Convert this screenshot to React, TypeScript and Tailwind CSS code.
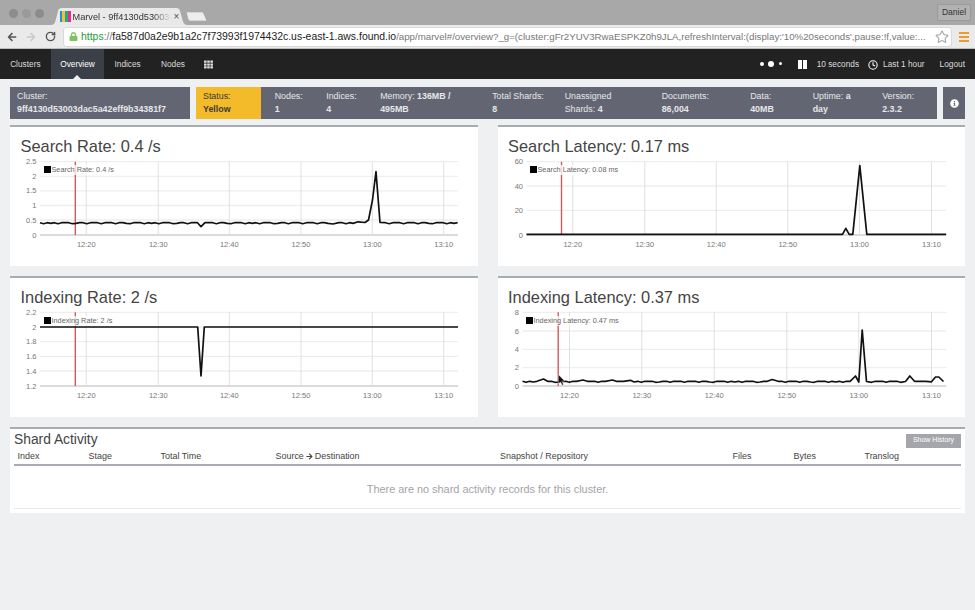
import { FaArrowLeft, FaArrowRight, FaInfoCircle, FaLock, FaTh } from 'react-icons/fa';
import { LuClock, LuRotateCw, LuStar } from 'react-icons/lu';

// Chart points are written in page coordinates, the viewBox of each chart takes care of the offset
type ChartProps = {
  left: number;
  top: number;
  plotLeft: number;
  plotRight: number;
  plotTop: number;
  plotBottom: number;
  yLabels: { y: number; label: string }[];
  xTicks: { x: number; label: string }[];
  redX: number;
  points: [number, number][];
  cursor?: boolean;
};

function wiggle(from: number, to: number, base: number, extra: [number, number][]): [number, number][] {
  const pts: [number, number][] = [];
  let i = 0;
  for (let x = from; x <= to; x += 3.6) {
    const near = extra.some(([ex]) => Math.abs(ex - x) < 3.6);
    if (!near) pts.push([x, base + (i % 4 === 1 ? 1 : i % 7 === 3 ? 0.7 : 0)]);
    i++;
  }
  return [...pts, ...extra].sort((a, b) => a[0] - b[0]);
}

const charts: { title: string; legend: string; legendX: number; chart: ChartProps }[] = [
  {
    title: 'Search Rate: 0.4 /s',
    legend: 'Search Rate: 0.4 /s',
    legendX: 44,
    chart: {
      left: 10,
      top: 155,
      plotLeft: 40,
      plotRight: 458,
      plotTop: 161.7,
      plotBottom: 235,
      yLabels: [
        { y: 161.7, label: '2.5' },
        { y: 176.3, label: '2' },
        { y: 190.8, label: '1.5' },
        { y: 205.5, label: '1' },
        { y: 220, label: '0.5' },
        { y: 235, label: '0' },
      ],
      xTicks: [
        { x: 86.3, label: '12:20' },
        { x: 158.3, label: '12:30' },
        { x: 229.3, label: '12:40' },
        { x: 301, label: '12:50' },
        { x: 372.3, label: '13:00' },
        { x: 443.7, label: '13:10' },
      ],
      redX: 75.3,
      points: wiggle(40, 458, 222.7, [
        [197.5, 222.7],
        [201, 226.7],
        [205, 222.7],
        [333, 224],
        [358, 221.8],
        [365, 222.5],
        [368.5, 220],
        [372.5, 200],
        [376, 171.7],
        [380, 222.5],
      ]),
    },
  },
  {
    title: 'Search Latency: 0.17 ms',
    legend: 'Search Latency: 0.08 ms',
    legendX: 530,
    chart: {
      left: 497.5,
      top: 155,
      plotLeft: 526,
      plotRight: 945.7,
      plotTop: 161.7,
      plotBottom: 235,
      yLabels: [
        { y: 161.7, label: '60' },
        { y: 186, label: '40' },
        { y: 210.3, label: '20' },
        { y: 235, label: '0' },
      ],
      xTicks: [
        { x: 572.3, label: '12:20' },
        { x: 644.3, label: '12:30' },
        { x: 715.7, label: '12:40' },
        { x: 787.3, label: '12:50' },
        { x: 859, label: '13:00' },
        { x: 931, label: '13:10' },
      ],
      redX: 561,
      points: [
        [526, 234.3],
        [842, 234.3],
        [845.3, 228.3],
        [848.7, 234.3],
        [852.3, 234.3],
        [859.3, 165.7],
        [866.3, 234.3],
        [945.7, 234.3],
      ],
    },
  },
  {
    title: 'Indexing Rate: 2 /s',
    legend: 'Indexing Rate: 2 /s',
    legendX: 44,
    chart: {
      left: 10,
      top: 306,
      plotLeft: 40,
      plotRight: 458,
      plotTop: 312.3,
      plotBottom: 386,
      yLabels: [
        { y: 312.3, label: '2.2' },
        { y: 327, label: '2' },
        { y: 341.7, label: '1.8' },
        { y: 356.3, label: '1.6' },
        { y: 371, label: '1.4' },
        { y: 386, label: '1.2' },
      ],
      xTicks: [
        { x: 86.3, label: '12:20' },
        { x: 158.3, label: '12:30' },
        { x: 229.3, label: '12:40' },
        { x: 301, label: '12:50' },
        { x: 372.3, label: '13:00' },
        { x: 443.7, label: '13:10' },
      ],
      redX: 75.3,
      points: [
        [40, 327],
        [197.7, 327],
        [201, 376],
        [204.3, 327],
        [458, 327],
      ],
    },
  },
  {
    title: 'Indexing Latency: 0.37 ms',
    legend: 'Indexing Latency: 0.47 ms',
    legendX: 526,
    chart: {
      left: 497.5,
      top: 306,
      plotLeft: 522,
      plotRight: 945.7,
      plotTop: 312.3,
      plotBottom: 386,
      yLabels: [
        { y: 312.3, label: '8' },
        { y: 331, label: '6' },
        { y: 349.3, label: '4' },
        { y: 367.7, label: '2' },
        { y: 386, label: '0' },
      ],
      xTicks: [
        { x: 569, label: '12:20' },
        { x: 641.3, label: '12:30' },
        { x: 713.7, label: '12:40' },
        { x: 786.3, label: '12:50' },
        { x: 858.3, label: '13:00' },
        { x: 931, label: '13:10' },
      ],
      redX: 557.7,
      cursor: true,
      points: wiggle(522, 945.7, 381.3, [
        [543, 379],
        [582.5, 380],
        [612, 380],
        [630, 380.3],
        [771.7, 379.5],
        [855, 376],
        [858.3, 382],
        [861.7, 330],
        [866, 381.5],
        [905, 381.5],
        [909.3, 376],
        [914, 381.3],
        [931, 381.8],
        [935, 377],
        [938.3, 377],
        [943, 381.5],
      ]),
    },
  },
];

function Chart({ left, top, plotLeft, plotRight, plotTop, plotBottom, yLabels, xTicks, redX, points, cursor }: ChartProps) {
  const w = 467;
  const h = 97;
  return (
    <svg width={w} height={h} viewBox={`${left} ${top} ${w} ${h}`} className="block">
      {yLabels.map((t) => (
        <g key={t.label}>
          <line x1={plotLeft} x2={plotRight} y1={t.y} y2={t.y} stroke={t.y === plotBottom ? '#cfcfcf' : '#eeeeee'} strokeWidth="1.3" />
          <text x={plotLeft - 3.5} y={t.y + 2.6} textAnchor="end" fontSize="7.5" fill="#777">
            {t.label}
          </text>
        </g>
      ))}
      {xTicks.map((t) => (
        <g key={t.label}>
          <line x1={t.x} x2={t.x} y1={plotTop} y2={plotBottom} stroke="#dedede" strokeWidth="0.9" />
          <text x={t.x} y={plotBottom + 11.5} textAnchor="middle" fontSize="7.5" fill="#777">
            {t.label}
          </text>
        </g>
      ))}
      <line x1={redX} x2={redX} y1={plotTop} y2={plotBottom} stroke="#d4595f" strokeWidth="1.4" />
      <polyline
        points={points.map((p) => p.join(',')).join(' ')}
        fill="none"
        stroke="#111"
        strokeWidth="1.7"
        strokeLinejoin="round"
      />
      {cursor && (
        <path d="M557.8 374.5 L557.8 384 L560 381.8 L561.6 385.2 L563 384.6 L561.5 381.3 L564.2 381 Z" fill="#111" stroke="#fff" strokeWidth="0.4" />
      )}
    </svg>
  );
}

function ChartPanel({ title, legend, legendX, chart }: (typeof charts)[number]) {
  return (
    <div className="relative h-[141px] border-t-2 border-[#a9abb3] bg-white">
      <h2 className="h-[28px] pl-[10.5px] pt-[7px] text-[16.4px] leading-[24px] text-[#444]">{title}</h2>
      <Chart {...chart} />
      <div
        className="absolute top-[37.5px] flex items-center bg-white/75 text-[7.3px] leading-[10px] text-[#666]"
        style={{ left: legendX - chart.left }}
      >
        <span className="mr-[0.5px] h-[7px] w-[7px] bg-black" />
        {legend}
      </div>
    </div>
  );
}

const stats = [
  { w: 'w-[51.5px]', a: 'Nodes:', b: '1' },
  { w: 'w-[54px]', a: 'Indices:', b: '4' },
  { w: 'w-[112px]', a: 'Memory:', aBold: ' 136MB /', b: '495MB' },
  { w: 'w-[72.5px]', a: 'Total Shards:', b: '8' },
  { w: 'w-[97px]', a: 'Unassigned', b: 'Shards:', bBold: ' 4' },
  { w: 'w-[88.5px]', a: 'Documents:', b: '86,004' },
  { w: 'w-[62.5px]', a: 'Data:', b: '40MB' },
  { w: 'w-[69.5px]', a: 'Uptime:', aBold: ' a', b: 'day' },
  { w: 'w-[50px]', a: 'Version:', b: '2.3.2' },
];

const columns = [
  { w: 'w-[71px]', label: 'Index' },
  { w: 'w-[72px]', label: 'Stage' },
  { w: 'w-[115px]', label: 'Total Time' },
  { w: 'w-[224.5px]', label: 'Source', arrow: true },
  { w: 'w-[232.5px]', label: 'Snapshot / Repository' },
  { w: 'w-[61px]', label: 'Files' },
  { w: 'w-[71px]', label: 'Bytes' },
  { w: 'w-[60px]', label: 'Translog' },
];

export default function App() {
  return (
    <div className="h-[610px] w-[975px] overflow-hidden bg-[#eff0f2] [font-family:'Liberation_Sans',Arial,sans-serif]">
      {/* Browser tab strip */}
      <div className="relative flex h-[25px] items-start bg-[#a8a8a8]">
        <div className="ml-[8.5px] mt-[8.5px] flex gap-[4px]">
          <span className="h-[9px] w-[9px] rounded-full bg-[#8c8c8c]" />
          <span className="h-[9px] w-[9px] rounded-full bg-[#9a9a9a]" />
          <span className="h-[9px] w-[9px] rounded-full bg-[#8c8c8c]" />
        </div>
        <div className="relative ml-[7px] mt-[8px] flex h-[17px] w-[136px] items-center pl-[9px]">
          <svg className="absolute inset-0" width="136" height="17" viewBox="0 0 136 17">
            <path d="M0 17 C4 17 4 14 5.5 9 L7 3 C7.6 1 8.5 0 11 0 L125 0 C127.5 0 128.5 1 129 3 L131 10 C132 14 133 17 136 17 Z" fill="#e9e9e9" />
          </svg>
          <span className="relative mr-[2px] flex h-[11px] w-[11px] shrink-0">
            <span className="w-1/4 bg-[#2f8fc4]" />
            <span className="w-1/4 bg-[#f3c32f]" />
            <span className="w-1/4 bg-[#23a79b]" />
            <span className="w-1/4 bg-[#ec2d7b]" />
          </span>
          <span className="relative w-[98px] whitespace-nowrap text-[9.2px] leading-[12px] text-[#333] [mask-image:linear-gradient(to_right,black_82%,transparent)]">
            Marvel - 9ff4130d53003d
          </span>
          <span className="relative ml-[3px] text-[10px] leading-[12px] text-[#555]">×</span>
        </div>
        <svg className="ml-[-1px] mt-[12px]" width="22" height="9" viewBox="0 0 22 9">
          <path d="M0 0 L16 0 C17 0 17.5 1 18 2 L21 9 L4 9 C3 9 2.5 8 2 7 Z" fill="#ededed" stroke="#8f8f8f" strokeWidth="0.5" />
        </svg>
        <div className="absolute right-[4px] top-[4px] flex h-[17px] w-[34px] items-center justify-center rounded-[2px] border border-[#9a9a9a] bg-[#b2b2b2] text-[8.5px] text-[#333]">
          Daniel
        </div>
      </div>

      {/* Browser toolbar */}
      <div className="flex h-[24px] items-center border-b border-[#bdbdbd] bg-[#eaeaea]">
        <FaArrowLeft className="ml-[7px] text-[10px] text-[#555]" />
        <FaArrowRight className="ml-[9px] text-[10px] text-[#c9c9c9]" />
        <LuRotateCw className="ml-[9px] text-[11px] text-[#555]" strokeWidth={3} />
        <div className="relative ml-[8px] flex h-[18px] w-[887px] items-center rounded-[2px] bg-white pl-[5px] shadow-[0_0_0_0.5px_#c8c8c8]">
          <FaLock className="shrink-0 text-[9px] text-[#7ec35c]" />
          <div className="ml-[3px] min-w-0 whitespace-nowrap text-[10.45px] leading-[14px] text-[#777]">
            <span className="text-[#1f9a3c]">https</span>
            ://
            <span className="text-[#222]">fa587d0a2e9b1a2c7f73993f1974432c.us-east-1.aws.found.io</span>
            <span className="text-[9.7px]">
              /app/marvel#/overview?_g=(cluster:gFr2YUV3RwaESPKZ0h9JLA,refreshInterval:(display:'10%20seconds',pause:!f,value:...
            </span>
          </div>
          <LuStar className="absolute right-[2px] top-[2px] text-[14px] text-[#aaa]" />
        </div>
        <div className="ml-[8px] flex w-[10px] flex-col gap-[2px]">
          <span className="h-[2px] bg-[#ef9a2f]" />
          <span className="h-[2px] bg-[#ef9a2f]" />
          <span className="h-[2px] bg-[#ef9a2f]" />
        </div>
      </div>

      {/* App nav */}
      <nav className="flex h-[30px] items-stretch bg-[#222] text-[8.3px] text-[#dcdcdc]">
        <a className="flex w-[50.7px] items-center justify-center">Clusters</a>
        <a className="relative flex w-[53.6px] items-center justify-center bg-[#3b4048] text-white">
          Overview
          <span className="absolute bottom-0 left-1/2 -ml-[4px] h-0 w-0 border-x-[4px] border-b-[4px] border-x-transparent border-b-[#eff0f2]" />
        </a>
        <a className="flex w-[46.7px] items-center justify-center">Indices</a>
        <a className="flex w-[44px] items-center justify-center">Nodes</a>
        <a className="flex w-[28px] items-center justify-center">
          <FaTh className="text-[9px]" />
        </a>
        <div className="ml-auto flex items-center pr-[10px]">
          <div className="mb-[1px] flex items-center">
            <span className="h-[4px] w-[4px] rounded-full bg-white" />
            <span className="ml-[4px] h-[6px] w-[6px] rounded-full bg-white" />
            <span className="ml-[5px] h-[3px] w-[3px] rounded-full bg-white" />
          </div>
          <div className="ml-[16px] mt-[1px] flex gap-[1px]">
            <span className="h-[9.5px] w-[4px] bg-white" />
            <span className="h-[9.5px] w-[4px] bg-white" />
          </div>
          <span className="ml-[10px]">10 seconds</span>
          <LuClock className="ml-[9px] mt-[1px] text-[10px] text-white" strokeWidth={2.5} />
          <span className="ml-[5px]">Last 1 hour</span>
          <span className="ml-[15px]">Logout</span>
        </div>
      </nav>

      <main className="px-[10px] pt-[8px]">
        {/* Cluster status */}
        <div className="flex h-[32px] gap-[6px] text-[8.85px] leading-[13px] text-[#e6e7ea]">
          <div className="flex w-[180px] flex-col justify-center bg-[#636672] pl-[7px]">
            <div>Cluster:</div>
            <div className="font-bold">9ff4130d53003dac5a42eff9b34381f7</div>
          </div>
          <div className="flex w-[741px] bg-[#636672]">
            <div className="flex w-[65px] flex-col justify-center bg-[#f3bb29] pl-[7px] text-[#3a3a3a]">
              <div>Status:</div>
              <div className="font-bold">Yellow</div>
            </div>
            <div className="flex pl-[13.7px]">
              {stats.map((s) => (
                <div key={s.a} className={`flex flex-col justify-center ${s.w}`}>
                  <div>
                    {s.a}
                    {s.aBold && <b>{s.aBold}</b>}
                  </div>
                  <div className={s.a === 'Unassigned' ? '' : 'font-bold'}>
                    {s.b}
                    {s.bBold && <b>{s.bBold}</b>}
                  </div>
                </div>
              ))}
            </div>
          </div>
          <div className="flex w-[22px] items-center justify-center bg-[#636672]">
            <FaInfoCircle className="text-[9px] text-white" />
          </div>
        </div>

        {/* Metric charts */}
        <div className="mt-[6px] grid grid-cols-2 gap-x-[20px] gap-y-[10px]">
          {charts.map((c) => (
            <ChartPanel key={c.title} {...c} />
          ))}
        </div>

        {/* Shard activity */}
        <section className="mt-[10px] h-[86px] border-t-2 border-[#a9abb3] bg-white px-[4px]">
          <div className="flex h-[20px] items-center justify-between pt-[3px]">
            <h3 className="text-[13.8px] text-[#444]">Shard Activity</h3>
            <button className="h-[14px] w-[55px] bg-[#a5a6ab] text-[7px] text-white">Show History</button>
          </div>
          <div className="flex h-[17px] items-center border-b-2 border-[#aaacb3] pl-[3.5px] pt-[1px] text-[8.95px] text-[#444]">
            {columns.map((c) => (
              <div key={c.label} className={`flex items-center ${c.w}`}>
                {c.label}
                {c.arrow && (
                  <>
                    <FaArrowRight className="mx-[2px] text-[7px]" />
                    Destination
                  </>
                )}
              </div>
            ))}
          </div>
          <div className="flex h-[43px] items-center justify-center border-b border-[#e9e9e9] pt-[4px] text-[10.9px] text-[#a3a3a8]">
            There are no shard activity records for this cluster.
          </div>
        </section>
      </main>
    </div>
  );
}
